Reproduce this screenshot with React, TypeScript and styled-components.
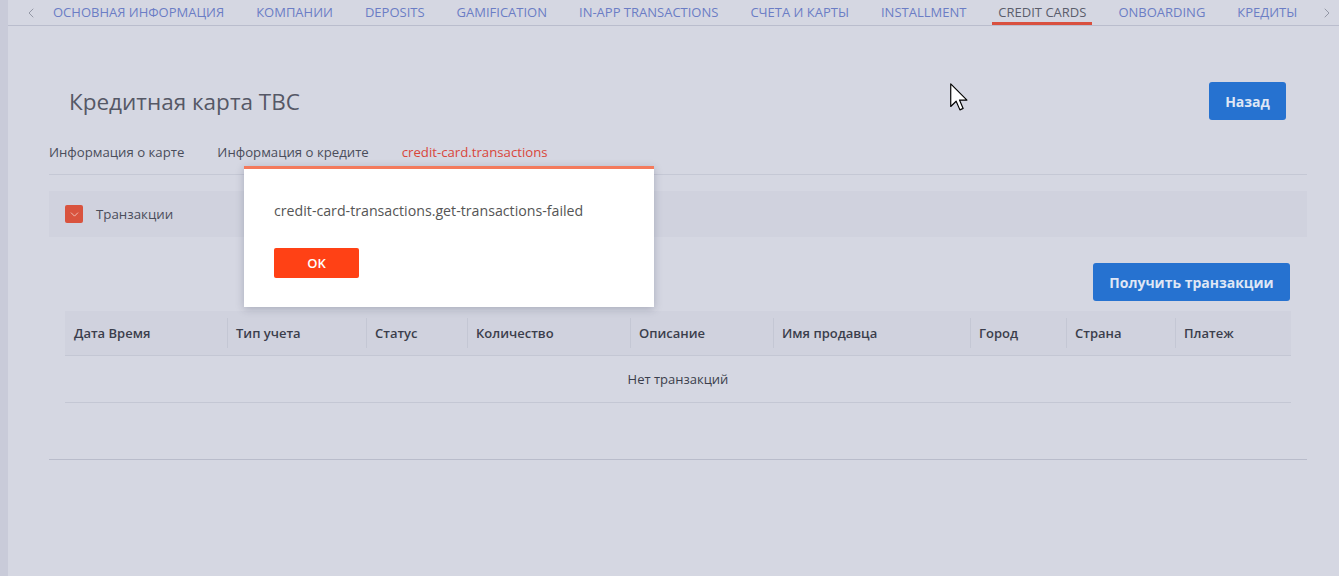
import React from 'react';
import styled, { createGlobalStyle } from 'styled-components';
import { ChevronLeft, ChevronRight, ChevronDown } from 'lucide-react';

const GlobalStyle = createGlobalStyle`
  html, body {
    margin: 0;
    padding: 0;
    background: #d5d7e2;
  }
  body {
    font-family: "Open Sans", "Noto Sans", sans-serif;
    color: #4a4d5a;
  }
  * {
    box-sizing: border-box;
  }
`;

const Page = styled.div`
  position: relative;
  display: flex;
  min-height: 576px;
  background: #d5d7e2;
  overflow: hidden;
`;

const SideStrip = styled.div`
  width: 8px;
  flex-shrink: 0;
  background: #c9cbd9;
`;

const Main = styled.div`
  flex: 1;
  min-width: 0;
  display: flex;
  flex-direction: column;
`;

const TopNav = styled.nav`
  display: flex;
  align-items: center;
  height: 26px;
  border-bottom: 1px solid #babdcd;
`;

const NavArrow = styled.button<{ $left?: boolean }>`
  width: 24px;
  height: 25px;
  flex-shrink: 0;
  display: flex;
  align-items: center;
  justify-content: center;
  padding: 0;
  border: 0;
  background: transparent;
  color: #8a8d9c;
  margin-left: ${({ $left }) => ($left ? '11px' : '0')};
`;

const NavTabs = styled.div`
  flex: 1;
  display: flex;
  gap: 20px;
  padding-left: 4px;
  overflow: hidden;
  height: 25px;
`;

const NavTab = styled.div<{ $active?: boolean }>`
  flex-shrink: 0;
  height: 25px;
  padding: 2px 6px 0;
  display: flex;
  align-items: center;
  font-size: 13px;
  text-transform: uppercase;
  white-space: nowrap;
  color: ${({ $active }) => ($active ? '#5a5d6b' : '#6b7dc5')};
  border-bottom: 3px solid ${({ $active }) => ($active ? '#d9503f' : 'transparent')};
`;

const Content = styled.div`
  padding: 0 32px 0 41px;
`;

const HeaderRow = styled.div`
  display: flex;
  align-items: center;
  justify-content: space-between;
  margin-top: 56px;
  height: 38px;
`;

const Title = styled.h1`
  margin: 0;
  padding-left: 20px;
  font-size: 22.5px;
  font-weight: 400;
  color: #555866;
`;

const BlueButton = styled.button<{ $wide?: boolean }>`
  height: 38px;
  width: ${({ $wide }) => ($wide ? '197px' : '77px')};
  padding: 0;
  margin-right: ${({ $wide }) => ($wide ? '1px' : '21px')};
  border: 0;
  border-radius: 3px;
  background: #2672d0;
  color: #dfe6f5;
  font-family: "Open Sans", "Noto Sans", sans-serif;
  font-size: 14px;
  font-weight: 700;
`;

const SubTabs = styled.div`
  display: flex;
  gap: 33px;
  margin-top: 23px;
  border-bottom: 1px solid #c5c8d5;
`;

const SubTab = styled.div<{ $active?: boolean }>`
  font-size: 13.2px;
  line-height: 18px;
  padding-bottom: 13px;
  color: ${({ $active }) => ($active ? '#d9463a' : '#4a4d5a')};
`;

const Panel = styled.section`
  margin-top: 16px;
  border-bottom: 1px solid #b9bccb;
  padding-bottom: 56px;
`;

const PanelHeader = styled.div`
  display: flex;
  align-items: center;
  gap: 13px;
  height: 46px;
  padding-left: 16px;
  background: #d0d2de;
  font-size: 13.3px;
  color: #4a4d5a;
`;

const Toggle = styled.span`
  width: 18px;
  height: 18px;
  border-radius: 2px;
  background: #d9533e;
  color: #f6dcd6;
  display: flex;
  align-items: center;
  justify-content: center;
`;

const PanelBody = styled.div`
  padding: 0 16px;
`;

const Actions = styled.div`
  display: flex;
  justify-content: flex-end;
  margin-top: 26px;
  margin-bottom: 10px;
`;

const Table = styled.div`
  display: grid;
  grid-template-columns: 162px 139px 101px 163px 143px 197px 96px 109px 1fr;
`;

const HeadCell = styled.div`
  height: 45px;
  display: flex;
  align-items: center;
  background: #d0d2de;
  border-bottom: 1px solid #c4c7d4;
`;

const HeadLabel = styled.span<{ $first?: boolean }>`
  display: flex;
  align-items: center;
  height: 30px;
  padding-left: 8px;
  border-left: 1px solid ${({ $first }) => ($first ? 'transparent' : '#c4c7d4')};
  font-size: 13px;
  font-weight: 600;
  color: #3b3e4c;
  white-space: nowrap;
`;

const EmptyRow = styled.div`
  grid-column: 1 / -1;
  height: 47px;
  display: flex;
  align-items: center;
  justify-content: center;
  border-bottom: 1px solid #c4c7d4;
  font-size: 13px;
  color: #3b3e4c;
`;

const Modal = styled.div`
  position: absolute;
  left: 244px;
  top: 166px;
  width: 410px;
  height: 141px;
  background: #ffffff;
  border-top: 3px solid #f47a5c;
  box-shadow: 0 2px 8px rgba(40, 44, 70, 0.25);
  padding: 32px 30px 0;
`;

const ModalText = styled.p`
  margin: 0;
  font-size: 14.2px;
  line-height: 20px;
  color: #555555;
`;

const OkButton = styled.button`
  margin-top: 27px;
  width: 85px;
  height: 30px;
  border: 0;
  border-radius: 2px;
  background: #ff4115;
  color: #ffffff;
  font-family: "Open Sans", "Noto Sans", sans-serif;
  font-size: 13px;
  font-weight: 600;
`;

const Cursor = styled.svg`
  position: absolute;
  left: 950px;
  top: 83px;
`;

const navItems = [
  'Основная информация',
  'Компании',
  'Deposits',
  'Gamification',
  'In-app transactions',
  'Счета и карты',
  'Installment',
  'Credit cards',
  'Onboarding',
  'Кредиты',
];

const columns = [
  'Дата Время',
  'Тип учета',
  'Статус',
  'Количество',
  'Описание',
  'Имя продавца',
  'Город',
  'Страна',
  'Платеж',
];

const App = () => (
  <>
    <GlobalStyle />
    <Page>
      <SideStrip />
      <Main>
        <TopNav>
          <NavArrow $left>
            <ChevronLeft size={16} strokeWidth={1.3} />
          </NavArrow>
          <NavTabs>
            {navItems.map((item) => (
              <NavTab key={item} $active={item === 'Credit cards'}>
                {item}
              </NavTab>
            ))}
          </NavTabs>
          <NavArrow>
            <ChevronRight size={16} strokeWidth={1.3} />
          </NavArrow>
        </TopNav>

        <Content>
          <HeaderRow>
            <Title>Кредитная карта ТВС</Title>
            <BlueButton>Назад</BlueButton>
          </HeaderRow>

          <SubTabs>
            <SubTab>Информация о карте</SubTab>
            <SubTab>Информация о кредите</SubTab>
            <SubTab $active>credit-card.transactions</SubTab>
          </SubTabs>

          <Panel>
            <PanelHeader>
              <Toggle>
                <ChevronDown size={13} strokeWidth={1.4} />
              </Toggle>
              Транзакции
            </PanelHeader>
            <PanelBody>
              <Actions>
                <BlueButton $wide>Получить транзакции</BlueButton>
              </Actions>
              <Table>
                {columns.map((col, i) => (
                  <HeadCell key={col}>
                    <HeadLabel $first={i === 0}>{col}</HeadLabel>
                  </HeadCell>
                ))}
                <EmptyRow>Нет транзакций</EmptyRow>
              </Table>
            </PanelBody>
          </Panel>
        </Content>
      </Main>

      <Modal>
        <ModalText>credit-card-transactions.get-transactions-failed</ModalText>
        <OkButton>OK</OkButton>
      </Modal>

      <Cursor width="19" height="28" viewBox="0 0 13 19">
        <path
          d="M0.5 0.5 L0.5 16 L4.2 12.4 L6.8 18.3 L9 17.3 L6.5 11.6 L11.6 11.6 Z"
          fill="#ffffff"
          stroke="#000000"
          strokeWidth="0.8"
          strokeLinejoin="round"
        />
      </Cursor>
    </Page>
  </>
);

export default App;
